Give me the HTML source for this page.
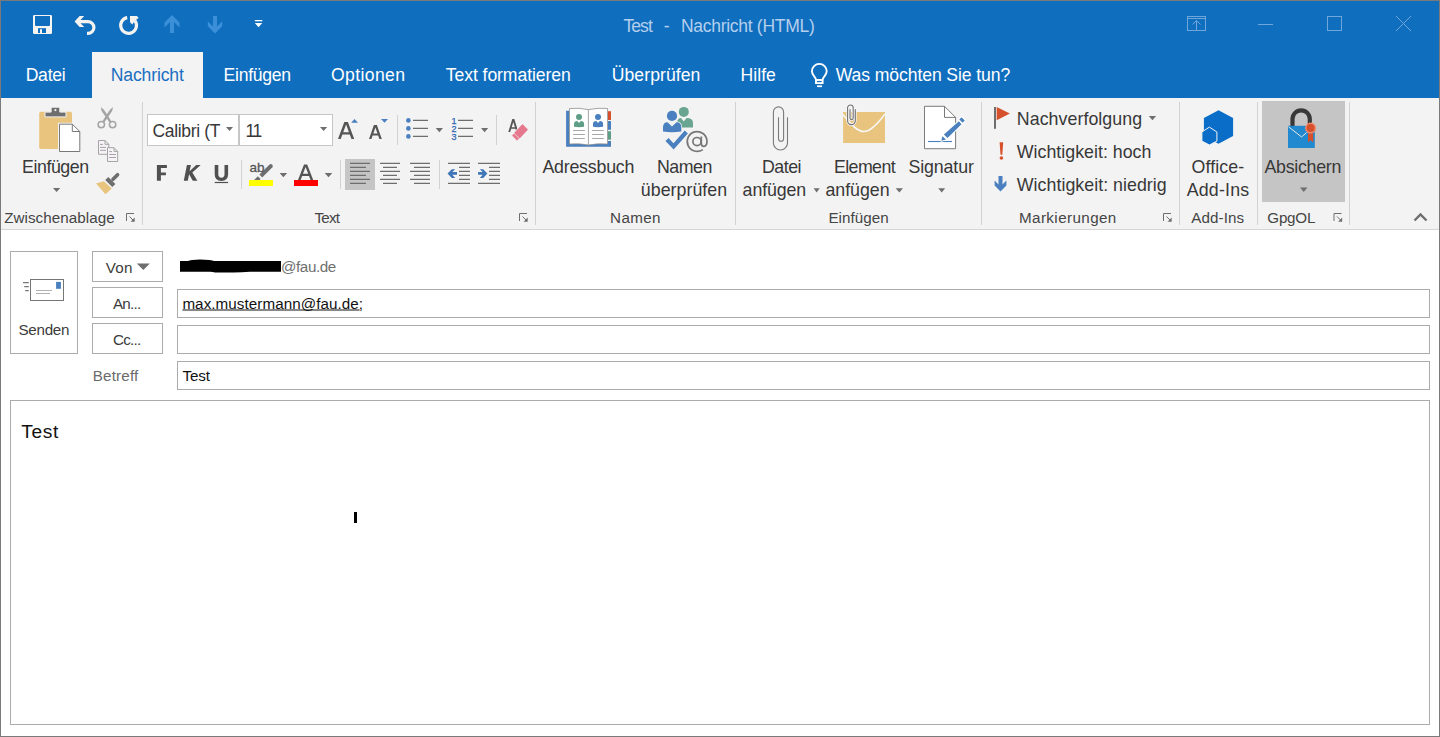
<!DOCTYPE html>
<html><head><meta charset="utf-8"><style>
html,body{margin:0;padding:0;}
body{width:1440px;height:737px;position:relative;overflow:hidden;background:#fff;font-family:"Liberation Sans",sans-serif;}
.t{position:absolute;white-space:pre;font-family:"Liberation Sans",sans-serif;}
.r{position:absolute;}
</style></head><body>
<div class="r" style="left:0;top:0;width:1440px;height:98px;background:#106ebe;"></div>
<div class="r" style="left:92px;top:52px;width:111px;height:46px;background:#f3f3f3;"></div>
<div class="r" style="left:0;top:98px;width:1440px;height:131px;background:#f3f3f3;"></div>
<div class="r" style="left:0;top:229px;width:1440px;height:1px;background:#d5d5d5;"></div>
<svg class="r" style="left:0;top:0" width="1440" height="737" viewBox="0 0 1440 737">
<!-- QAT -->
<g id="qat">
<rect x="33" y="15" width="19" height="19" rx="1.3" fill="#f7f5f2"/>
<path d="M35 16H50V25Q50 26 49 26H36Q35 26 35 25Z" fill="#106ebe"/>
<rect x="38" y="28.2" width="8" height="4.8" fill="#106ebe"/>
<rect x="40" y="29.2" width="2" height="3.8" fill="#f7f5f2"/>
<path d="M74.6 21.6L79.6 16H84.2L80.6 20V23.2L84.2 27H79.6Z" fill="#f5f3f0"/>
<path d="M80 21.65H88A5.9 5.9 0 0 1 88 33.45H87" fill="none" stroke="#f5f3f0" stroke-width="3.2"/>
<path d="M127.2 17.6A7.9 7.9 0 1 0 134.8 20.5" fill="none" stroke="#f5f3f0" stroke-width="3.2"/>
<path d="M130 16H136.9L138.7 17.9L135 20.4L132.4 24.4L130 22.2Z" fill="#f5f3f0"/>
<path d="M172 15L179.5 22.5V27.5L174 22V33H170V22L164.5 27.5V22.5Z" fill="#3a8fd8"/>
<path d="M215 33.5L222.2 26.3V21.3L217 26.5V16H213V26.5L207.8 21.3V26.3Z" fill="#3a8fd8"/>
<rect x="254.8" y="20" width="7.5" height="1.3" fill="#fff"/>
<path d="M254.8 23H262.3L258.5 27.3Z" fill="#fff"/>
</g>
<!-- window controls -->
<g fill="none" stroke="#6fa6dc" stroke-width="1">
<rect x="1187.5" y="16.5" width="18" height="14"/>
<path d="M1187.5 18.5H1205.5M1196.5 20.5V30.5M1192.5 24.5L1196.5 20.5L1200.5 24.5"/>
<path d="M1258 24.5H1273"/>
<rect x="1327.5" y="16.5" width="14" height="14"/>
<path d="M1396 16L1411 31M1411 16L1396 31"/>
</g>
<!-- lightbulb -->
<g fill="none" stroke="#fff" stroke-width="1.9">
<path d="M815.9 79.6C815.9 76.8 811.9 75.4 811.9 71.3A7.4 7.4 0 1 1 826.7 71.3C826.7 75.4 822.7 76.8 822.7 79.6"/>
<rect x="816" y="80" width="6.6" height="3.1"/>
</g>
<rect x="817" y="85.4" width="5" height="1.7" fill="#fff"/>

<!-- separators -->
<g fill="#d2d2d2">
<rect x="142" y="102" width="1" height="123"/>
<rect x="535" y="102" width="1" height="123"/>
<rect x="735" y="102" width="1" height="123"/>
<rect x="981" y="102" width="1" height="123"/>
<rect x="1179" y="102" width="1" height="123"/>
<rect x="1257" y="102" width="1" height="123"/>
<rect x="1349" y="102" width="1" height="123"/>
<rect x="241" y="160" width="1" height="29"/>
<rect x="340" y="160" width="1" height="29"/>
<rect x="397" y="115" width="1" height="30"/>
<rect x="439" y="160" width="1" height="29"/>
<rect x="496" y="115" width="1" height="30"/>
</g>

<!-- clipboard -->
<rect x="39.2" y="111.8" width="32.8" height="37.1" rx="1.6" fill="#e9c47e"/>
<path d="M51.1 108.7Q51.1 107.2 52.6 107.2H58.3Q59.8 107.2 59.8 108.7V112.1H66V116.9H45V112.1H51.1Z" fill="#6e6e6e" stroke="#f3f3f3" stroke-width="1"/>
<circle cx="55.4" cy="110.1" r="1.1" fill="#f3f3f3"/>
<path d="M59.5 124.2H72.3L79.8 131.5V151.5H59.5Z" fill="#f3f3f3" stroke="#f3f3f3" stroke-width="3"/>
<path d="M59.5 124.2H72.3L79.8 131.5V151.5H59.5Z" fill="#fff" stroke="#787878" stroke-width="1"/>
<path d="M72.3 124.2V131.5H79.8" fill="none" stroke="#787878" stroke-width="1"/>
<path d="M53 188H60.2L56.6 192.1Z" fill="#6e6e6e"/>
<!-- scissors -->
<g fill="none" stroke="#a4a4a4" stroke-width="1.5">
<circle cx="101.3" cy="124.6" r="3.2"/>
<circle cx="112.6" cy="124.6" r="3.2"/>
</g>
<path d="M100.8 107L103.9 109.8L107.6 115.2L111.3 121.3L109.5 122.4L105.4 116.6L101.6 111Z" fill="#a4a4a4"/>
<path d="M113 107L109.9 109.8L106.2 115.2L102.5 121.3L104.3 122.4L108.4 116.6L112.2 111Z" fill="#a4a4a4"/>
<!-- copy -->
<g fill="#f7f2f7" stroke="#a4a4a4" stroke-width="1">
<path d="M98.5 140.5H105L108.8 144.3V154.3H98.5Z"/>
<path d="M107.5 147.7H114L117.7 151.4V161.5H107.5Z"/>
</g>
<g stroke="#a4a4a4" stroke-width="1">
<path d="M100 144.4H103M100 147.4H106M100 150.3H106M109.2 151.6H112M109.2 154.5H116M109.2 157.5H116"/>
<path d="M105 140.5V144.3H108.8M114 147.7V151.4H117.7" fill="none"/>
</g>
<!-- format painter -->
<path d="M96 183.6L103.8 181.3L111.8 188.4L105.5 194.2Z" fill="#e9c47e"/>
<path d="M105.2 180L108.3 176.9L115.4 184L112.3 187.1Z" fill="#6e6e6e"/>
<path d="M113 179.3L117.6 174.7" stroke="#6e6e6e" stroke-width="3.6" stroke-linecap="round"/>

<rect x="1262" y="101" width="83" height="101" fill="#c5c5c5"/>
<!-- font boxes -->
<rect x="147.5" y="114.5" width="91" height="31" fill="#fff" stroke="#c6c6c6"/>
<rect x="238.5" y="114.5" width="94" height="31" fill="#fff" stroke="#c6c6c6"/>
<rect x="238" y="115" width="2" height="30" fill="#c6c6c6"/>
<g fill="#6e6e6e">
<path d="M226 127H233L229.5 131Z"/>
<path d="M320 127H327.2L323.6 131Z"/>
<path d="M279.6 173H287.2L283.4 177.2Z"/>
<path d="M324.7 173H332.3L328.5 177.2Z"/>
<path d="M435.7 128H443L439.35 132.2Z"/>
<path d="M481 128H488.2L484.6 132.2Z"/>
<path d="M813.6 188.3H819.7L816.65 192.5Z"/>
<path d="M895.7 188.3H903L899.35 192.5Z"/>
<path d="M938.3 188.3H945.2L941.75 192.5Z"/>
<path d="M1148.8 116H1156.1L1152.45 120.2Z"/>
<path d="M1300 187.6H1307.5L1303.75 192Z"/>
</g>
<!-- highlight / font color -->
<rect x="249" y="180" width="24" height="6" fill="#ffff00"/>
<rect x="294" y="180" width="24" height="6" fill="#ff0000"/>
<path d="M262.2 177.4L272.4 167.3A2 2 0 0 0 269.6 164.5L259.4 174.6Z" fill="#6e6e6e"/>
<path d="M254.2 180L257.8 176.2L260.6 179L259.6 180Z" fill="#6e6e6e"/>
<!-- grow/shrink triangles -->
<path d="M351.1 122.8H358L354.55 119.1Z" fill="#4a7fc0"/>
<path d="M381 119.1H388L384.5 122.8Z" fill="#4a7fc0"/>
<!-- bullets -->
<g fill="#4a7fc0">
<circle cx="408.4" cy="120.4" r="2.3"/><circle cx="408.4" cy="128.4" r="2.3"/><circle cx="408.4" cy="136.4" r="2.3"/>
</g>
<g stroke="#6e6e6e" stroke-width="1.2">
<path d="M413 120.4H428M413 128.4H428M413 136.4H428"/>
<path d="M458 120.4H473M458 128.4H473M458 136.4H473"/>
</g>
<!-- eraser -->
<g fill="#555" fill-rule="evenodd">
<path d="M338.00 139.00L344.30 122.00H347.90L354.20 139.00H351.50L349.80 134.40H342.40L340.70 139.00ZM343.22 132.20L346.10 124.43L348.98 132.20Z"/>
<path d="M369.00 139.00L373.90 125.00H376.90L381.80 139.00H379.40L378.14 135.40H372.66L371.40 139.00ZM373.36 133.40L375.40 127.57L377.44 133.40Z"/>
<path d="M298.00 180.00L304.00 164.40H307.20L313.20 180.00H310.60L309.02 175.90H302.18L300.60 180.00ZM302.98 173.80L305.60 167.00L308.22 173.80Z"/>
<path d="M508.30 132.00L512.30 119.00H514.30L518.30 132.00H516.40L515.38 128.70H511.22L510.20 132.00ZM511.68 127.20L513.30 121.92L514.92 127.20Z"/>
</g>
<path d="M522.5 125L527.2 129.7L519.7 137.6L515 132.9Z" fill="#e6788d" stroke="#f3f3f3" stroke-width="2.6" stroke-linejoin="round"/>
<path d="M522.5 125L527.2 129.7L519.7 137.6L515 132.9Z" fill="#e6788d" stroke="#e6788d" stroke-width="1.2" stroke-linejoin="round"/>
<path d="M514.15 133.75L518.85 138.45L517 140.3L512.3 135.6Z" fill="#e6788d" stroke="#e6788d" stroke-width="0.6" stroke-linejoin="round"/>
<!-- align -->
<rect x="345" y="159" width="30" height="31" fill="#c5c5c5"/>
<g stroke="#6e6e6e" stroke-width="1.3">
<path d="M350 163.3H370M350 167.3H366M350 171.3H370M350 175.3H366M350 179.3H370M350 183.3H366"/>
<path d="M380 163.3H400M383 167.3H397M380 171.3H400M383 175.3H397M380 179.3H400M383 183.3H397"/>
<path d="M410 163.3H430M414 167.3H430M410 171.3H430M414 175.3H430M410 179.3H430M414 183.3H430"/>
<path d="M448 163.3H470M459 167.3H470M459 171.3H470M459 175.3H470M459 179.3H470M448 183.3H470"/>
<path d="M478 163.3H500M489 167.3H500M489 171.3H500M489 175.3H500M489 179.3H500M478 183.3H500"/>
</g>
<path d="M447.5 173.4L451.8 169.2H455.2L452.3 172.1H457V174.7H452.3L455.2 177.9H451.8Z" fill="#3f76b8"/>
<path d="M487.4 173.4L483.2 169.2H479.8L482.7 172.1H478.1V174.7H482.7L479.8 177.9H483.2Z" fill="#3f76b8"/>

<g fill="#505050">
<path d="M156.9 164.9H166.9V168H160.9V172.4H165.9V175.2H160.9V180.8H156.9Z"/>
<path d="M186.9 164.9H190.9L189.6 171.2L196.2 164.9H200.7L192.3 172.6L197.4 180.8H192.8L189.1 174.3L187.8 180.8H183.8Z"/>
<path d="M214.7 164.9H218.3V174.3Q218.3 177.7 221.4 177.7Q224.5 177.7 224.5 174.3V164.9H228.1V174.3Q228.1 180.9 221.4 180.9Q214.7 180.9 214.7 174.3Z"/>
<rect x="214.7" y="181.9" width="13.4" height="1.2"/>
</g>
<!-- address book -->
<path d="M566.1 110.8H569.5V143.5H608V146.8H566.1Z" fill="#4a80bf"/>
<rect x="608" y="111.2" width="3" height="8.8" fill="#d6502b"/>
<rect x="608" y="121" width="3" height="8.8" fill="#4a80bf"/>
<rect x="608" y="131.2" width="3" height="8.5" fill="#5f9e86"/>
<rect x="608" y="141" width="3" height="5.8" fill="#4a80bf"/>
<path d="M569.5 108.5Q579 107.6 588.4 109.6Q598 107.6 607.5 108.5V144Q598 143.1 588.4 145Q579 143.1 569.5 144Z" fill="#fff" stroke="#8f8f8f" stroke-width="0.8"/>
<path d="M588.4 109.6V145" stroke="#8f8f8f" stroke-width="0.8"/>
<g fill="#5f9e86"><circle cx="579" cy="117" r="3"/><path d="M574 126.8V124.2Q574 121 577.3 121L579 123L580.8 121Q584.1 121 584.1 124.2V126.8Q579 127.6 574 126.8Z"/></g>
<g fill="#4a80bf"><circle cx="598" cy="117" r="3"/><path d="M593 126.8V124.2Q593 121 596.3 121L598 123L599.8 121Q603.1 121 603.1 124.2V126.8Q598 127.6 593 126.8Z"/></g>
<g stroke="#a8a8a8" stroke-width="1">
<path d="M573.1 130.5H584.8M573.1 134.5H584.8M573.1 138.5H584.8M592.1 130.5H603.8M592.1 134.5H603.8M592.1 138.5H603.8"/>
</g>
<!-- names check -->
<g fill="#6aa591"><circle cx="683.8" cy="111.9" r="5"/><path d="M677.2 127.6V123Q677.2 118 681 118L683.8 121.5L686.6 118Q693 118 693 123V127.6Z"/></g>
<g fill="#f3f3f3" stroke="#f3f3f3" stroke-width="1.6"><circle cx="672" cy="115.9" r="5.1"/><path d="M663 131.5V128Q663 122.3 667 122.3L672 127L677 122.3Q681.3 122.3 681.3 128V131.5Z"/></g>
<g fill="#4a80bf"><circle cx="672" cy="115.9" r="5.1"/><path d="M663 131.5V127.5Q663 122.3 667.5 122.3L672 126.5L676.5 122.3Q681.3 122.3 681.3 127.5V131.5Q672 133 663 131.5Z"/></g>
<path d="M667 139.5L673.6 146.5L686.3 132" fill="none" stroke="#4a80bf" stroke-width="4.2"/>
<circle cx="697" cy="141.6" r="4.1" fill="none" stroke="#777" stroke-width="1.7"/>
<path d="M701.3 136.6V143.2Q701.3 146.3 703.9 146.3Q707 146.3 707 140.8A9.9 9.9 0 1 0 702.8 149.6" fill="none" stroke="#777" stroke-width="1.7"/>

<!-- paperclip -->
<path d="M778.5 117.2V138.7A2.55 2.55 0 0 0 783.6 138.7V112A5.1 5.1 0 0 0 773.4 112V143A7.05 7.05 0 0 0 787.5 143V117.2" fill="none" stroke="#7a7a7a" stroke-width="1.1"/>
<!-- envelope + clip -->
<rect x="843.1" y="112" width="41.9" height="31" fill="#e9c47e"/>
<path d="M843 114.5C852 126 858 131.6 864 131.6C870 131.6 876 126 885 114" fill="none" stroke="#f8f8f8" stroke-width="1.5"/>
<path d="M850 109.3V118A1.6 1.6 0 0 0 853.2 118V107.8A2.8 2.8 0 0 0 847.6 107.8V120.8A3.85 3.85 0 0 0 855.3 120.8V109.3" fill="none" stroke="#f8f8f8" stroke-width="2.6"/>
<path d="M850 109.3V118A1.6 1.6 0 0 0 853.2 118V107.8A2.8 2.8 0 0 0 847.6 107.8V120.8A3.85 3.85 0 0 0 855.3 120.8V109.3" fill="none" stroke="#707070" stroke-width="1.1"/>
<!-- signature -->
<path d="M924.5 106.3H944.5L955.6 117.4V148.7H924.5Z" fill="#fff" stroke="#7a7a7a" stroke-width="1"/>
<path d="M944.5 106.3V117.4H955.6" fill="none" stroke="#7a7a7a" stroke-width="1"/>
<path d="M928 141.5H952" stroke="#4a80bf" stroke-width="1.1"/>
<g stroke="#fff" stroke-width="2" stroke-linejoin="round" fill="#fff">
<path d="M943.9 134.5L947.5 138.1L961.5 124.2L958.9 121.3Z"/>
<path d="M959.3 119.4L961.5 117.2L964.8 120.5L962.6 122.7Z"/>
<path d="M941.3 140.7L942.4 136.3L946 139.6Z"/>
</g>
<g fill="#4a80bf">
<path d="M943.9 134.5L947.5 138.1L961.5 124.2L958.9 121.3Z"/>
<path d="M959.3 119.4L961.5 117.2L964.8 120.5L962.6 122.7Z"/>
<path d="M941.3 140.7L942.4 136.3L946 139.6Z"/>
</g>

<!-- flag / ! / arrow -->
<rect x="994" y="107" width="2" height="21.8" fill="#6e6e6e"/>
<path d="M996.7 107L1009.9 113.6L996.7 120.2Z" fill="#d6502b"/>
<path d="M999.6 142.3H1003.2L1002.3 154.8H1000.5Z" fill="#d6502b"/>
<circle cx="1001.4" cy="158" r="1.8" fill="#d6502b"/>
<path d="M998.5 176H1002.5V184.5L1006.4 180.6V185.6L1000.5 191.4L994.6 185.6V180.6L998.5 184.5Z" fill="#4a80bf"/>

<!-- office addins -->
<path d="M1218.5 110.2L1233.1 118V135.9L1218.5 143.7L1203.9 135.9V118Z" fill="#0a6ec8"/>
<path d="M1209.4 127.1L1216.9 132V141.1L1209.4 145L1201.9 141.1V132Z" fill="#0a6ec8" stroke="#f3f3f3" stroke-width="1"/>

<!-- absichern -->
<path d="M1292.5 126V119A8.6 8.6 0 0 1 1309.8 119V126" fill="none" stroke="#383838" stroke-width="4.2"/>
<rect x="1288" y="125.8" width="26.8" height="22.2" fill="#2089d0"/>
<path d="M1288.5 126.8L1301.5 136.9L1306.7 132.6" fill="none" stroke="#e8e8e8" stroke-width="1"/>
<path d="M1308 133.3H1313.2V142.4L1310.6 140L1308 142.4Z" fill="#d6502b"/>
<path d="M1316.50 128.10L1315.57 129.23L1315.92 130.66L1314.59 131.28L1314.28 132.71L1312.81 132.69L1311.91 133.85L1310.60 133.20L1309.29 133.85L1308.39 132.69L1306.92 132.71L1306.61 131.28L1305.28 130.66L1305.63 129.23L1304.70 128.10L1305.63 126.97L1305.28 125.54L1306.61 124.92L1306.92 123.49L1308.39 123.51L1309.29 122.35L1310.60 123.00L1311.91 122.35L1312.81 123.51L1314.28 123.49L1314.59 124.92L1315.92 125.54L1315.57 126.97Z" fill="#f1896b"/>
<circle cx="1310.6" cy="128.1" r="4" fill="#d6502b"/>

<!-- dialog launchers -->
<path d="M126.5 221V213.5H134M129.5 216.5L133 220" fill="none" stroke="#6e6e6e" stroke-width="1"/>
<path d="M134.7 217.6V221.7H130.6Z" fill="#6e6e6e"/>
<path d="M519.5 221V213.5H527M522.5 216.5L526 220" fill="none" stroke="#6e6e6e" stroke-width="1"/>
<path d="M527.7 217.6V221.7H523.6Z" fill="#6e6e6e"/>
<path d="M1163.5 221V213.5H1171M1166.5 216.5L1170 220" fill="none" stroke="#6e6e6e" stroke-width="1"/>
<path d="M1171.7 217.6V221.7H1167.6Z" fill="#6e6e6e"/>
<path d="M1334.0 221V213.5H1341.5M1337.0 216.5L1340.5 220" fill="none" stroke="#6e6e6e" stroke-width="1"/>
<path d="M1342.2 217.6V221.7H1338.1Z" fill="#6e6e6e"/>
<path d="M1414.5 220.5L1420.5 214.5L1426.5 220.5" fill="none" stroke="#6e6e6e" stroke-width="2.4"/>
<!-- compose -->
<g fill="#fff" stroke="#ababab" stroke-width="1">
<rect x="10.5" y="251.5" width="67" height="102"/>
<rect x="92.5" y="251.5" width="70" height="30"/>
<rect x="92.5" y="287.5" width="70" height="30"/>
<rect x="92.5" y="323.5" width="70" height="30"/>
<rect x="177.5" y="289.5" width="1252" height="28"/>
<rect x="177.5" y="325.5" width="1252" height="28"/>
<rect x="177.5" y="361.5" width="1252" height="28"/>
<rect x="10.5" y="400.5" width="1419" height="324"/>
</g>
<rect x="30.5" y="279.5" width="33" height="21" fill="#fff" stroke="#767676" stroke-width="1"/>
<rect x="56.1" y="281.9" width="4.8" height="6.9" fill="#4a80bf"/>
<path d="M36 290.5H52M36 293.5H50" stroke="#b0b0b0" stroke-width="1"/>
<path d="M23 282.6H28.8M24.2 286.6H28.8M25.2 290.6H28.8" stroke="#777" stroke-width="1.1"/>
<path d="M136.8 263.5H149.8L143.3 270Z" fill="#6e6e6e"/>
<path d="M180 261H188Q190 259.4 200 259.4Q212 259.4 214 261H281V271.7H250Q240 272.6 230 272.4H215Q213 271.7 210 271.7H180Z" fill="#000"/>
<rect x="182.4" y="309.5" width="177.2" height="1" fill="#111"/>
<rect x="354" y="512" width="3" height="11" fill="#000"/>
</svg>

<div class="t" style="left:623.40px;top:18.00px;font-size:17.5px;line-height:17.5px;letter-spacing:-0.898px;color:#b4cfed;">Test</div><div class="t" style="left:663.80px;top:18.00px;font-size:17.5px;line-height:17.5px;letter-spacing:0.000px;color:#b4cfed;">-</div><div class="t" style="left:681.00px;top:18.00px;font-size:17.5px;line-height:17.5px;letter-spacing:-0.291px;color:#b4cfed;">Nachricht (HTML)</div><div class="t" style="left:25.70px;top:67.00px;font-size:17.6px;line-height:17.6px;letter-spacing:-0.270px;color:#ffffff;">Datei</div><div class="t" style="left:110.80px;top:67.00px;font-size:17.6px;line-height:17.6px;letter-spacing:-0.164px;color:#1a6fc1;">Nachricht</div><div class="t" style="left:223.60px;top:67.00px;font-size:17.6px;line-height:17.6px;letter-spacing:-0.293px;color:#ffffff;">Einfügen</div><div class="t" style="left:331.00px;top:67.00px;font-size:17.6px;line-height:17.6px;letter-spacing:0.371px;color:#ffffff;">Optionen</div><div class="t" style="left:445.80px;top:67.00px;font-size:17.6px;line-height:17.6px;letter-spacing:-0.076px;color:#ffffff;">Text formatieren</div><div class="t" style="left:611.70px;top:67.00px;font-size:17.6px;line-height:17.6px;letter-spacing:0.076px;color:#ffffff;">Überprüfen</div><div class="t" style="left:740.50px;top:67.00px;font-size:17.6px;line-height:17.6px;letter-spacing:0.049px;color:#ffffff;">Hilfe</div><div class="t" style="left:835.70px;top:67.00px;font-size:17.6px;line-height:17.6px;letter-spacing:-0.092px;color:#ffffff;">Was möchten Sie tun?</div><div class="t" style="left:22.10px;top:159.00px;font-size:17.8px;line-height:17.8px;letter-spacing:-0.450px;color:#383838;">Einfügen</div><div class="t" style="left:542.40px;top:159.00px;font-size:17.8px;line-height:17.8px;letter-spacing:-0.209px;color:#383838;">Adressbuch</div><div class="t" style="left:657.00px;top:159.00px;font-size:17.8px;line-height:17.8px;letter-spacing:-0.494px;color:#383838;">Namen</div><div class="t" style="left:640.80px;top:182.00px;font-size:17.8px;line-height:17.8px;letter-spacing:0.036px;color:#383838;">überprüfen</div><div class="t" style="left:762.00px;top:159.00px;font-size:17.8px;line-height:17.8px;letter-spacing:-0.487px;color:#383838;">Datei</div><div class="t" style="left:742.60px;top:182.00px;font-size:17.8px;line-height:17.8px;letter-spacing:-0.105px;color:#383838;">anfügen</div><div class="t" style="left:834.00px;top:159.00px;font-size:17.8px;line-height:17.8px;letter-spacing:-0.597px;color:#383838;">Element</div><div class="t" style="left:825.40px;top:182.00px;font-size:17.8px;line-height:17.8px;letter-spacing:-0.021px;color:#383838;">anfügen</div><div class="t" style="left:908.40px;top:159.00px;font-size:17.8px;line-height:17.8px;letter-spacing:-0.112px;color:#383838;">Signatur</div><div class="t" style="left:1016.80px;top:111.00px;font-size:17.8px;line-height:17.8px;letter-spacing:0.057px;color:#383838;">Nachverfolgung</div><div class="t" style="left:1016.80px;top:144.00px;font-size:17.8px;line-height:17.8px;letter-spacing:0.012px;color:#383838;">Wichtigkeit: hoch</div><div class="t" style="left:1016.80px;top:177.00px;font-size:17.8px;line-height:17.8px;letter-spacing:0.034px;color:#383838;">Wichtigkeit: niedrig</div><div class="t" style="left:1191.50px;top:159.00px;font-size:17.8px;line-height:17.8px;letter-spacing:0.118px;color:#383838;">Office-</div><div class="t" style="left:1186.70px;top:182.00px;font-size:17.8px;line-height:17.8px;letter-spacing:0.195px;color:#383838;">Add-Ins</div><div class="t" style="left:1264.40px;top:159.00px;font-size:17.8px;line-height:17.8px;letter-spacing:-0.255px;color:#383838;">Absichern</div><div class="t" style="left:152.50px;top:123.00px;font-size:17.5px;line-height:17.5px;letter-spacing:-0.330px;color:#383838;">Calibri (T</div><div class="t" style="left:245.50px;top:123.00px;font-size:17.5px;line-height:17.5px;letter-spacing:-1.472px;color:#383838;">11</div><div class="t" style="left:4.20px;top:210.00px;font-size:15.2px;line-height:15.2px;letter-spacing:0.049px;color:#454545;">Zwischenablage</div><div class="t" style="left:314.60px;top:210.00px;font-size:15.2px;line-height:15.2px;letter-spacing:-0.858px;color:#454545;">Text</div><div class="t" style="left:610.10px;top:210.00px;font-size:15.2px;line-height:15.2px;letter-spacing:0.346px;color:#454545;">Namen</div><div class="t" style="left:828.40px;top:210.00px;font-size:15.2px;line-height:15.2px;letter-spacing:0.041px;color:#454545;">Einfügen</div><div class="t" style="left:1019.00px;top:210.00px;font-size:15.2px;line-height:15.2px;letter-spacing:0.404px;color:#454545;">Markierungen</div><div class="t" style="left:1191.30px;top:210.00px;font-size:15.2px;line-height:15.2px;letter-spacing:0.068px;color:#454545;">Add-Ins</div><div class="t" style="left:1267.30px;top:210.00px;font-size:15.2px;line-height:15.2px;letter-spacing:-0.229px;color:#454545;">GpgOL</div><div class="t" style="left:18.50px;top:322.00px;font-size:15.2px;line-height:15.2px;letter-spacing:-0.284px;color:#3c3c3c;">Senden</div><div class="t" style="left:105.80px;top:260.00px;font-size:15.2px;line-height:15.2px;letter-spacing:0.241px;color:#3c3c3c;">Von</div><div class="t" style="left:113.00px;top:296.00px;font-size:15.2px;line-height:15.2px;letter-spacing:-0.766px;color:#3c3c3c;">An...</div><div class="t" style="left:113.00px;top:332.00px;font-size:15.2px;line-height:15.2px;letter-spacing:-0.763px;color:#3c3c3c;">Cc...</div><div class="t" style="left:92.80px;top:368.00px;font-size:15.2px;line-height:15.2px;letter-spacing:0.161px;color:#6a6a6a;">Betreff</div><div class="t" style="left:281.10px;top:259.00px;font-size:15.2px;line-height:15.2px;letter-spacing:-0.434px;color:#6f6f6f;">@fau.de</div><div class="t" style="left:182.40px;top:296.00px;font-size:15.2px;line-height:15.2px;letter-spacing:0.069px;color:#111111;">max.mustermann@fau.de;</div><div class="t" style="left:182.50px;top:368.00px;font-size:15.2px;line-height:15.2px;letter-spacing:-0.125px;color:#111111;">Test</div><div class="t" style="left:21.30px;top:422.00px;font-size:19.2px;line-height:19.2px;letter-spacing:0.594px;color:#111111;">Test</div><div class="t" style="left:249.50px;top:161.00px;font-size:13.5px;line-height:13.5px;letter-spacing:0.000px;color:#555555;-webkit-text-stroke:0.3px #555;">ab</div><div class="t" style="left:451.50px;top:117.00px;font-size:9px;line-height:9px;letter-spacing:0.000px;color:#2f66b0;-webkit-text-stroke:0.25px #2f66b0;">1</div><div class="t" style="left:451.50px;top:125.00px;font-size:9px;line-height:9px;letter-spacing:0.000px;color:#2f66b0;-webkit-text-stroke:0.25px #2f66b0;">2</div><div class="t" style="left:451.50px;top:133.00px;font-size:9px;line-height:9px;letter-spacing:0.000px;color:#2f66b0;-webkit-text-stroke:0.25px #2f66b0;">3</div>
<div class="r" style="left:0;top:0;width:1438px;height:735px;border:1px solid #7a7a7a;"></div>
</body></html>
